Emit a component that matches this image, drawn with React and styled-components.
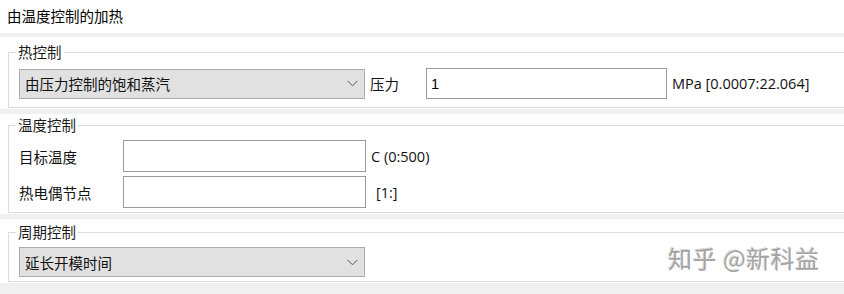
import React from "react";
import styled, { createGlobalStyle } from "styled-components";

const Global = createGlobalStyle`
  html, body { margin: 0; padding: 0; background: #f0f0f0; }
  body { font-family: "Noto Sans CJK SC", "Noto Sans", sans-serif; color: #000; }
  * { box-sizing: border-box; }
`;

const Page = styled.div`
  position: relative;
  width: 844px;
  height: 294px;
  overflow: hidden;
  background: #f0f0f0;
  display: flex;
  flex-direction: column;
`;

const Header = styled.div`
  height: 33px;
  background: #fff;
  display: flex;
  align-items: center;
  padding: 0 0 3px 7px;
  font-size: 14.5px;
  margin-bottom: 4px;
`;

const Panel = styled.div`
  background: #fff;
  width: 880px;
  padding: ${(p) => p.$pad} 0 ${(p) => p.$padB || "1px"} 8px;
  margin-bottom: ${(p) => p.$mb || "5px"};
`;

const Group = styled.fieldset`
  margin: 0;
  border: 1px solid #dcdcdc;
  border-right: none;
  padding: ${(p) => p.$pt} 0 ${(p) => p.$pb} 10px;
  display: flex;
  flex-direction: column;
  gap: 4px;
`;

const Legend = styled.legend`
  font-size: 14.5px;
  line-height: 20px;
  padding: 0 2px;
  margin-left: -3px;
  color: #1a1a1a;
`;

const Row = styled.div`
  display: flex;
  align-items: center;
  height: ${(p) => p.$h || "32px"};
`;

const Select = styled.div`
  width: 346px;
  height: 30px;
  background: #e1e1e1;
  border: 1px solid #adadad;
  display: flex;
  align-items: center;
  justify-content: space-between;
  padding: 0 6px 0 5px;
  font-size: 14.5px;
  color: #111;
`;

const Chevron = () => (
  <svg width="11" height="7" viewBox="0 0 11 7">
    <path d="M0.5 0.8 L5.5 5.8 L10.5 0.8" fill="none" stroke="#555" strokeWidth="1" />
  </svg>
);

const Label = styled.span`
  width: ${(p) => p.$w};
  margin-left: ${(p) => p.$ml || "0"};
  font-size: 14.5px;
  color: #111;
  white-space: nowrap;
`;

const Input = styled.div`
  width: ${(p) => p.$w};
  height: ${(p) => p.$h || "32px"};
  background: #fff;
  border: 1px solid #9a9a9a;
  display: flex;
  align-items: center;
  padding-left: 4px;
  font-family: "Liberation Sans", "Noto Sans", sans-serif;
  font-size: 14.5px;
`;

const Unit = styled.span`
  margin-left: ${(p) => p.$ml};
  font-family: "Open Sans", "Noto Sans", sans-serif;
  font-size: 14.5px;
  color: #111;
  white-space: nowrap;
`;

const Watermark = styled.div`
  position: absolute;
  left: 668px;
  top: 240px;
  font-size: 24px;
  color: #a4a4a4;
  letter-spacing: 0.5px;
  text-shadow: 1px 1px 0 #fff, -1px -1px 0 #dadada;
  font-family: "Noto Sans CJK SC", sans-serif;
  white-space: nowrap;
`;

export default function App() {
  return (
    <Page>
      <Global />
      <Header>由温度控制的加热</Header>

      <Panel $pad="5px" $padB="1px">
        <Group $pt="6px" $pb="8px">
          <Legend>热控制</Legend>
          <Row $h="31px">
            <Select>
              由压力控制的饱和蒸汽
              <Chevron />
            </Select>
            <Label $w="56px" $ml="5px">压力</Label>
            <Input $w="241px" $h="31px">1</Input>
            <Unit $ml="5px">MPa [0.0007:22.064]</Unit>
          </Row>
        </Group>
      </Panel>

      <Panel $pad="1px" $padB="1px">
        <Group $pt="5px" $pb="4px">
          <Legend>温度控制</Legend>
          <Row>
            <Label $w="104px">目标温度</Label>
            <Input $w="243px" />
            <Unit $ml="5px">C (0:500)</Unit>
          </Row>
          <Row>
            <Label $w="104px">热电偶节点</Label>
            <Input $w="243px" />
            <Unit $ml="10px">[1:]</Unit>
          </Row>
        </Group>
      </Panel>

      <Panel $pad="3px" $padB="1px">
        <Group $pt="5px" $pb="4px">
          <Legend>周期控制</Legend>
          <Row $h="30px">
            <Select>
              延长开模时间
              <Chevron />
            </Select>
          </Row>
        </Group>
      </Panel>

      <Watermark>知乎 @新科益</Watermark>
    </Page>
  );
}
